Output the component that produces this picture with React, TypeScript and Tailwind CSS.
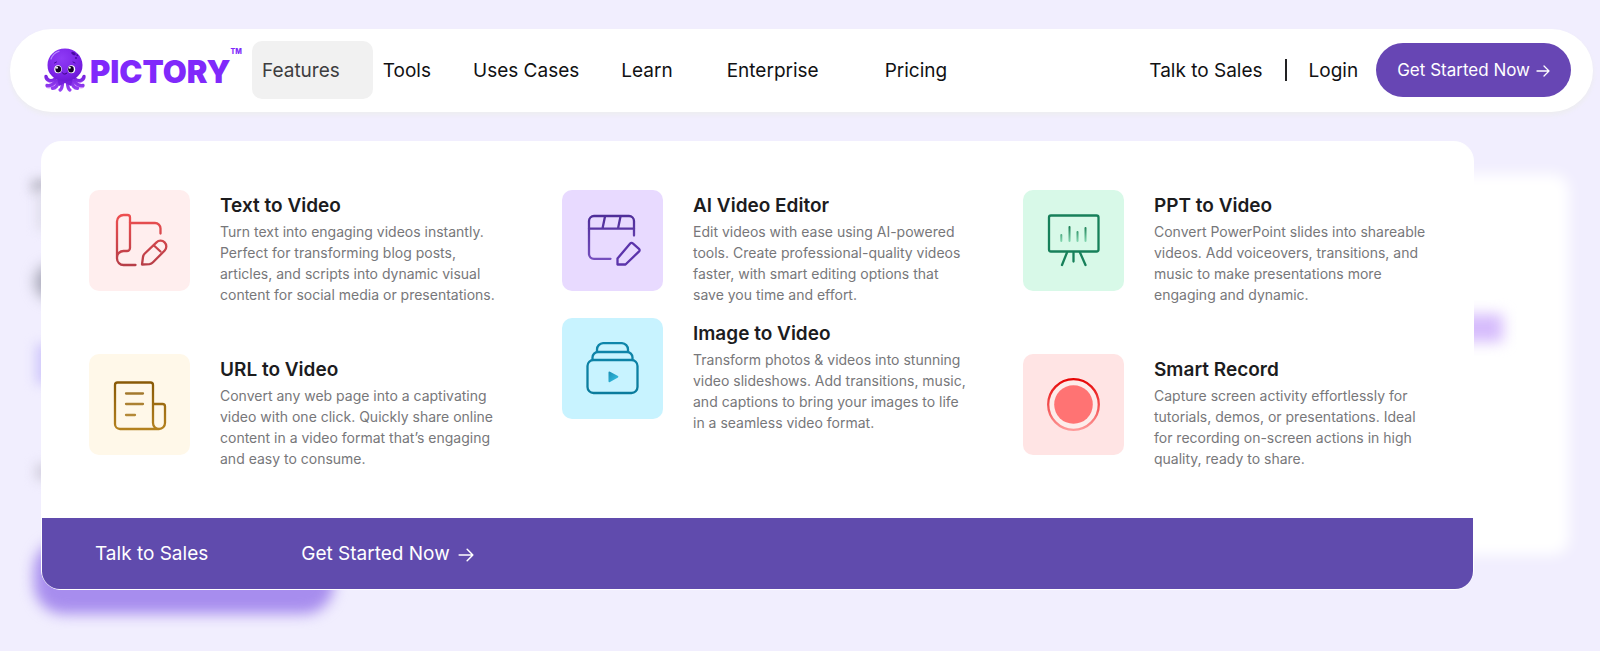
import React from "react";

type Feature = {
  title: string;
  text: string;
  tile: string;
  icon: React.ReactNode;
};

function Gradient({ id, from, to }: { id: string; from: string; to: string }) {
  return (
    <defs>
      <linearGradient id={id} gradientUnits="userSpaceOnUse" x1="50" y1="24" x2="50" y2="77">
        <stop offset="0" stopColor={from} />
        <stop offset="1" stopColor={to} />
      </linearGradient>
    </defs>
  );
}

function Icon({ children }: { children: React.ReactNode }) {
  return (
    <svg
      viewBox="0 0 101 101"
      className="h-full w-full"
      fill="none"
      strokeWidth="2.3"
      strokeLinecap="round"
      strokeLinejoin="round"
      aria-hidden="true"
    >
      {children}
    </svg>
  );
}

const textIcon = (
  <Icon>
    <Gradient id="g-text" from="#ee4f50" to="#b53d47" />
    <g stroke="url(#g-text)">
      <path d="M46.5 75H34.5a6.5 6.5 0 0 1-6.5-6.5V31.5a6.5 6.5 0 0 1 6.5-6.5H38.5a2.5 2.5 0 0 1 2.5 2.5V58a3 3 0 0 1-3 3H34.5a6.5 6.5 0 0 0-6.5 6.5" />
      <path d="M41 33H66a5.5 5.5 0 0 1 5.5 5.5V43.5" />
      <path d="M53 74.5 54 67a6 6 0 0 1 1.8-3.5L67.5 52.3a5.8 5.8 0 0 1 8.2 8.2L64 72.3a6 6 0 0 1-3.5 1.8Z" />
      <path d="m65 55.5 6.5 6" />
    </g>
  </Icon>
);

const urlIcon = (
  <Icon>
    <Gradient id="g-url" from="#855604" to="#b58320" />
    <g stroke="url(#g-url)">
      <path d="M70 75H31a5 5 0 0 1-5-5V31a2.5 2.5 0 0 1 2.5-2.5H61.5A2.5 2.5 0 0 1 64 31V69a6 6 0 0 0 12 0V52.5a2.5 2.5 0 0 0-2.5-2.5H64" />
      <path d="M37 39.5H54M37 50H54M37 61H46" opacity="0.85" />
    </g>
  </Icon>
);

const editorIcon = (
  <Icon>
    <Gradient id="g-editor" from="#4d2c98" to="#7c55c4" />
    <g stroke="url(#g-editor)">
      <path d="M48.5 68.8H32a5 5 0 0 1-5-5V31a5 5 0 0 1 5-5H67a5 5 0 0 1 5 5V45.5" />
      <path d="M27 38.7H72M43 26.5 40.5 38.5M58.5 26.5 56 38.5" />
    </g>
    <path
      d="M55.5 74.5V68.5L68.2 53.5a1.8 1.8 0 0 1 2.6-.1L77 58.8a1.8 1.8 0 0 1 .1 2.6L63.5 74.5Z"
      stroke="#5b34ab"
    />
  </Icon>
);

const imageIcon = (
  <Icon>
    <Gradient id="g-image" from="#0e86ab" to="#0b7b9c" />
    <linearGradient id="g-play" x1="0" y1="0" x2="1" y2="1">
      <stop offset="0" stopColor="#1a8fb5" />
      <stop offset="1" stopColor="#38c4e6" />
    </linearGradient>
    <g stroke="url(#g-image)">
      <rect x="25.5" y="42" width="50" height="33" rx="6" />
      <path d="M30.5 41.5V39.5a5.5 5.5 0 0 1 5.5-5.5H65a5.5 5.5 0 0 1 5.5 5.5V41.5" />
      <path d="M35 33.5V31.5a6.3 6.3 0 0 1 6-6.3H60a6.3 6.3 0 0 1 6 6.3V33.5" />
    </g>
    <path
      d="M46.5 54.5a1 1 0 0 1 1.5-.8L56 58a1 1 0 0 1 0 1.5L48 64a1 1 0 0 1-1.5-.8Z"
      fill="url(#g-play)"
    />
  </Icon>
);

const pptIcon = (
  <Icon>
    <linearGradient id="g-bars" gradientUnits="userSpaceOnUse" x1="50" y1="36" x2="50" y2="52">
      <stop offset="0" stopColor="#157a50" />
      <stop offset="1" stopColor="#86d9b2" />
    </linearGradient>
    <g stroke="#17805a">
      <rect x="26" y="25.5" width="49.5" height="36" rx="2" />
      <path d="M44 62.5 39 75M50.5 62.5V71.5M57 62.5 62.5 75" />
    </g>
    <path
      d="M38.3 45V51M46.5 37V51M54.5 42V51M62.5 38V51"
      stroke="url(#g-bars)"
      strokeWidth="2"
    />
  </Icon>
);

const recordIcon = (
  <Icon>
    <Gradient id="g-record" from="#e60000" to="#ff9c9c" />
    <circle cx="50.5" cy="50.5" r="25.3" fill="#fdecea" stroke="url(#g-record)" />
    <circle cx="50.5" cy="50.5" r="19.3" fill="#ff7373" />
  </Icon>
);

const columns: { gap: string; items: Feature[] }[] = [
  {
    gap: "gap-[49px]",
    items: [
      {
        title: "Text to Video",
        text: "Turn text into engaging videos instantly. Perfect for transforming blog posts, articles, and scripts into dynamic visual content for social media or presentations.",
        tile: "bg-[#ffeeee]",
        icon: textIcon,
      },
      {
        title: "URL to Video",
        text: "Convert any web page into a captivating video with one click. Quickly share online content in a video format that’s engaging and easy to consume.",
        tile: "bg-[#fff8e9]",
        icon: urlIcon,
      },
    ],
  },
  {
    gap: "gap-[13px]",
    items: [
      {
        title: "AI Video Editor",
        text: "Edit videos with ease using AI-powered tools. Create professional-quality videos faster, with smart editing options that save you time and effort.",
        tile: "bg-[#e8daff]",
        icon: editorIcon,
      },
      {
        title: "Image to Video",
        text: "Transform photos & videos into stunning video slideshows. Add transitions, music, and captions to bring your images to life in a seamless video format.",
        tile: "bg-[#c8f3ff]",
        icon: imageIcon,
      },
    ],
  },
  {
    gap: "gap-[49px]",
    items: [
      {
        title: "PPT to Video",
        text: "Convert PowerPoint slides into shareable videos. Add voiceovers, transitions, and music to make presentations more engaging and dynamic.",
        tile: "bg-[#d8f9e8]",
        icon: pptIcon,
      },
      {
        title: "Smart Record",
        text: "Capture screen activity effortlessly for tutorials, demos, or presentations. Ideal for recording on-screen actions in high quality, ready to share.",
        tile: "bg-[#ffe4e4]",
        icon: recordIcon,
      },
    ],
  },
];

function Octopus() {
  return (
    <svg viewBox="0 0 42 44" className="h-11 w-[42px] shrink-0" fill="none" aria-hidden="true">
      <defs>
        <radialGradient id="o-head" cx="0.4" cy="0.3" r="0.75">
          <stop offset="0" stopColor="#8f3bf6" />
          <stop offset="0.7" stopColor="#7a22e6" />
          <stop offset="1" stopColor="#6a18d2" />
        </radialGradient>
        <linearGradient id="o-leg" gradientUnits="userSpaceOnUse" x1="0" y1="26" x2="0" y2="44">
          <stop offset="0" stopColor="#7420dc" />
          <stop offset="1" stopColor="#9a45f5" />
        </linearGradient>
      </defs>
      <g stroke="#d9a0ff" strokeWidth="3.6" strokeLinecap="round">
        <path d="M11 32C7 35 4 33.5 2.4 29.8M31 32c4 3 7 1.5 8.6-2.2M12 34.5C9 38.5 6.5 39 3.6 38.5M30 34.5c3 4 5.5 4.5 8.4 4" />
      </g>
      <g stroke="url(#o-leg)" strokeWidth="3.4" strokeLinecap="round">
        <path d="M11 31C7 34 2.5 32.5 2 28.5M31 31c4 3 8.5 1.5 9-2.5" />
        <path d="M12 33C9 37 6 38 3 37.5M30 33c3 4 6 5 9 4.5" />
        <path d="M14.5 33C14 38 11 40.5 8.5 40.3M27.5 33c.5 5 3.5 7.5 6 7.3" />
        <path d="M18.5 33C18.5 38 18 41 16.2 42M23.5 33c0 5 .5 8 2.3 9" />
      </g>
      <path d="M13 30H29L27 38 21 35 15 38Z" fill="#7420dc" />
      <path
        d="M21 .5C31 .5 38.5 8 38.5 17c0 5-1.5 8-4 10.5-3 3.5-8 6-13.5 6s-10.5-2.5-13.5-6C5 25 3.5 22 3.5 17 3.5 8 11 .5 21 .5Z"
        fill="url(#o-head)"
      />
      <path d="M7 11C8.5 7 11.5 4.5 15 3.3" stroke="#b98bff" strokeWidth="1.2" strokeLinecap="round" />
      <g fill="#4a0aa5">
        <ellipse cx="29.5" cy="5.5" rx="2.4" ry="1.5" transform="rotate(28 29.5 5.5)" />
        <circle cx="33.3" cy="7.3" r="1" />
        <circle cx="32" cy="10" r="1.1" />
      </g>
      <path d="M10.5 15 12.5 14M31 15 29 14" stroke="#4a0aa5" strokeLinecap="round" />
      <ellipse cx="14" cy="21.3" rx="3.7" ry="4" fill="#fff" />
      <ellipse cx="27.5" cy="21.3" rx="3.7" ry="4" fill="#fff" />
      <ellipse cx="14.3" cy="21.3" rx="2.8" ry="3.3" fill="#120425" />
      <ellipse cx="27" cy="21.3" rx="2.8" ry="3.3" fill="#120425" />
      <circle cx="13" cy="19.8" r="1" fill="#fff" />
      <circle cx="25.8" cy="19.8" r="1" fill="#fff" />
      <path d="M18.5 25c1.2 1.5 3.2 1.5 4.4 0" stroke="#35057c" strokeLinecap="round" />
    </svg>
  );
}

function Arrow({ className }: { className: string }) {
  return (
    <svg
      viewBox="0 0 14 14"
      className={className}
      fill="none"
      stroke="currentColor"
      strokeWidth="1.3"
      strokeLinecap="round"
      strokeLinejoin="round"
      aria-hidden="true"
    >
      <path d="M1 7H13M8 2l5 5-5 5" />
    </svg>
  );
}

function Backdrop() {
  return (
    <div className="absolute inset-0 overflow-hidden" aria-hidden="true">
      <div className="absolute left-[32px] top-[180px] h-3 w-20 bg-[#b4b2c0] blur-[6px]" />
      <div className="absolute left-[38px] top-[190px] h-10 w-20 bg-[#dddbe8] blur-[6px]" />
      <div className="absolute left-[35px] top-[264px] h-9 w-20 rounded-full bg-[#a5a5b5] blur-[7px]" />
      <div className="absolute left-[36px] top-[344px] h-10 w-20 bg-[#cfc7fb] blur-[6px]" />
      <div className="absolute left-[36px] top-[464px] h-4 w-20 bg-[#d0cddc] blur-[6px]" />
      <div className="absolute left-[34px] top-[540px] h-[74px] w-[300px] rounded-[30px] bg-[#a78dee] blur-[7px]" />
      <div className="absolute right-[31px] top-[174px] h-[381px] w-[300px] rounded-2xl bg-white blur-[7px]" />
      <div className="absolute right-[97px] top-[314px] h-7 w-20 bg-[#d6bcfc] blur-[7px]" />
    </div>
  );
}

function FeatureCard({ title, text, tile, icon }: Feature) {
  return (
    <a href="#" className="flex items-start gap-[30px]">
      <span className={`block size-[101px] shrink-0 rounded-[10px] ${tile}`}>{icon}</span>
      <span className="block w-[278px] pt-1">
        <span className="block text-[19px] font-semibold leading-6 text-[#1c1c1e]">{title}</span>
        <span className="mt-[3px] block text-[14px] leading-[21px] text-[#77777a]">{text}</span>
      </span>
    </a>
  );
}

export default function App() {
  return (
    <main className="relative min-h-screen bg-[#f1eefe] pb-10 pl-[10px] pr-[7px] pt-[29px] font-['Inter','Liberation_Sans',sans-serif] text-[#111113]">
      <Backdrop />
      <header className="relative flex h-[83px] items-center rounded-full bg-white pb-px pl-[34px] pr-[22px] text-[19px] shadow-[0_3px_5px_#ededf0]">
        <a href="#" className="flex w-[208px] items-center text-[#8029fb]" aria-label="Pictory">
          <Octopus />
          <span className="pl-1 pt-0.5 text-[31px] font-black leading-none">PICTORY</span>
          <span className="self-start text-[7px] font-extrabold leading-none">TM</span>
        </a>
        <nav className="flex items-center" aria-label="Main">
          <button className="h-[58px] rounded-[10px] bg-[#f1f1f1] pl-[10px] pr-[33px] pt-0.5 text-left text-[#3d3d3f]">
            Features
          </button>
          <button className="pl-[10px] pr-8 pt-0.5">Tools</button>
          <button className="pl-[10px] pr-8 pt-0.5">Uses Cases</button>
          <button className="pl-[10px] pr-8 pt-0.5">Learn</button>
          <a href="#" className="pl-[22px] pr-8 pt-0.5">Enterprise</a>
          <a href="#" className="pl-[34px] pt-0.5">Pricing</a>
        </nav>
        <div className="ml-auto flex items-center">
          <a href="#" className="pt-0.5">Talk to Sales</a>
          <span className="mx-[22px] h-[22px] w-0.5 bg-[#222224]" />
          <a href="#" className="pt-0.5">Login</a>
          <a
            href="#"
            className="ml-[18px] flex h-[54px] items-center gap-1.5 rounded-full bg-[#6746b4] px-[21px] pt-0.5 text-[17px] text-white"
          >
            Get Started Now
            <Arrow className="size-3.5" />
          </a>
        </div>
      </header>

      <section className="relative ml-[31px] mr-[119px] mt-[29px] rounded-[20px] border border-white bg-white">
        <div className="grid grid-cols-[473fr_461fr_414fr] pb-[49px] pl-[47px] pr-9 pt-12">
          {columns.map((column, i) => (
            <div key={i} className={`flex flex-col ${column.gap}`}>
              {column.items.map((item) => (
                <FeatureCard key={item.title} {...item} />
              ))}
            </div>
          ))}
        </div>
        <footer className="flex h-[71px] items-center gap-[93px] rounded-b-[18px] bg-[#604bad] px-[53px] pt-0.5 text-[19px] text-white">
          <a href="#">Talk to Sales</a>
          <a href="#" className="flex items-center gap-2">
            Get Started Now
            <Arrow className="size-4" />
          </a>
        </footer>
      </section>
    </main>
  );
}
